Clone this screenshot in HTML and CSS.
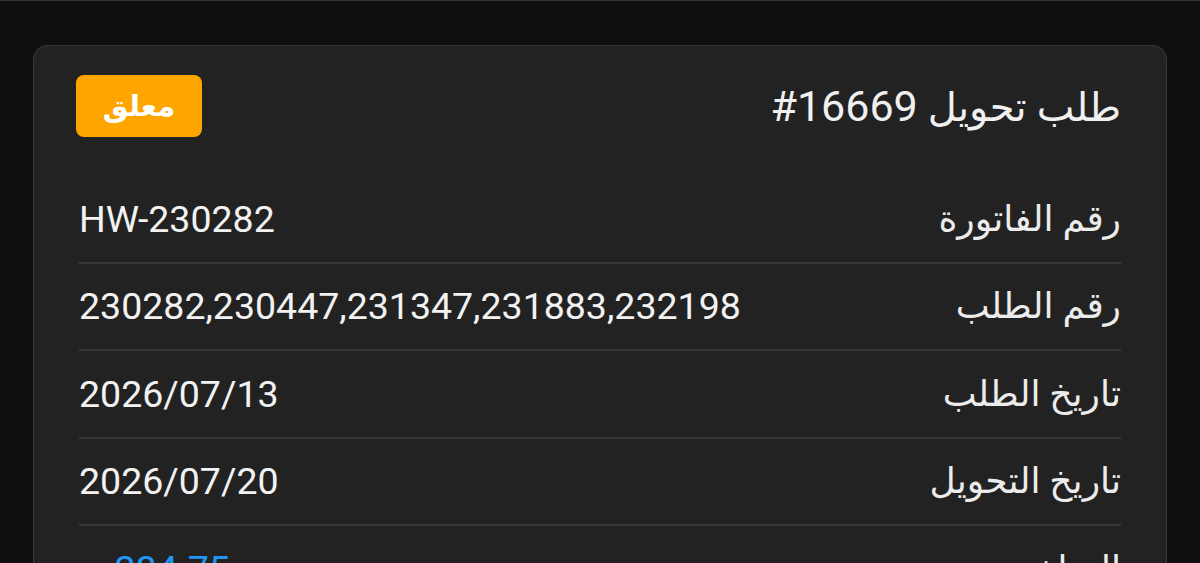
FILE: index.html
```html
<!DOCTYPE html>
<html lang="ar" dir="rtl">
<head>
<meta charset="utf-8">
<title>طلب تحويل</title>
<link rel="stylesheet" href="styles.css">
</head>
<body>
<div class="page">
  <section class="card">
    <header class="card-head">
      <h1 class="title">طلب تحويل <bdi class="ltr">#16669</bdi></h1>
      <span class="badge">معلق</span>
    </header>
    <div class="rows">
      <div class="row">
        <span class="label">رقم الفاتورة</span>
        <span class="value">HW-230282</span>
      </div>
      <div class="row">
        <span class="label">رقم الطلب</span>
        <span class="value">230282,230447,231347,231883,232198</span>
      </div>
      <div class="row">
        <span class="label">تاريخ الطلب</span>
        <span class="value">2026/07/13</span>
      </div>
      <div class="row">
        <span class="label">تاريخ التحويل</span>
        <span class="value">2026/07/20</span>
      </div>
      <div class="row">
        <span class="label">المبلغ</span>
        <span class="value amount"><span class="cur">ر.س</span><span class="num">284.75</span></span>
      </div>
    </div>
  </section>
</div>
</body>
</html>
```

FILE: styles.css
```css
html, body {
  margin: 0;
  padding: 0;
  height: 100%;
  background: #0f0f0f;
}
body {
  border-top: 1px solid #333;
  box-sizing: border-box;
  overflow: hidden;
  font-family: Roboto, "DejaVu Sans", sans-serif;
  color: #ececec;
}
.page {
  padding: 44px 33px 0 33px;
}
.card {
  background: #222222;
  border: 1px solid #363636;
  border-radius: 14px;
  padding: 29px 45px 0 42px;
  min-height: 700px;
}
.card-head {
  display: flex;
  justify-content: space-between;
  align-items: center;
  height: 62px;
}
.title {
  margin: 0;
  font-weight: 400;
  font-size: 40px;
  line-height: 1;
  color: #f0f0f0;
}
.ltr {
  direction: ltr;
  unicode-bidi: isolate;
  font-size: 43px;
}
.badge {
  display: flex;
  align-items: center;
  justify-content: center;
  width: 126px;
  height: 62px;
  background: #ffa500;
  border-radius: 8px;
  color: #fff;
  font-weight: 700;
  font-size: 29px;
}
.rows {
  margin-top: 39px;
  padding-left: 3px;
}
.row {
  display: flex;
  justify-content: space-between;
  align-items: center;
  height: 85.5px;
  border-bottom: 2px solid #383838;
}
.label {
  font-size: 36px;
  color: #ececec;
}
.value {
  direction: ltr;
  font-size: 37.5px;
  color: #f2f2f2;
}
.amount {
  display: flex;
  align-items: baseline;
  gap: 8px;
  color: #2196f3;
}
.cur {
  font-size: 14px;
}
```
